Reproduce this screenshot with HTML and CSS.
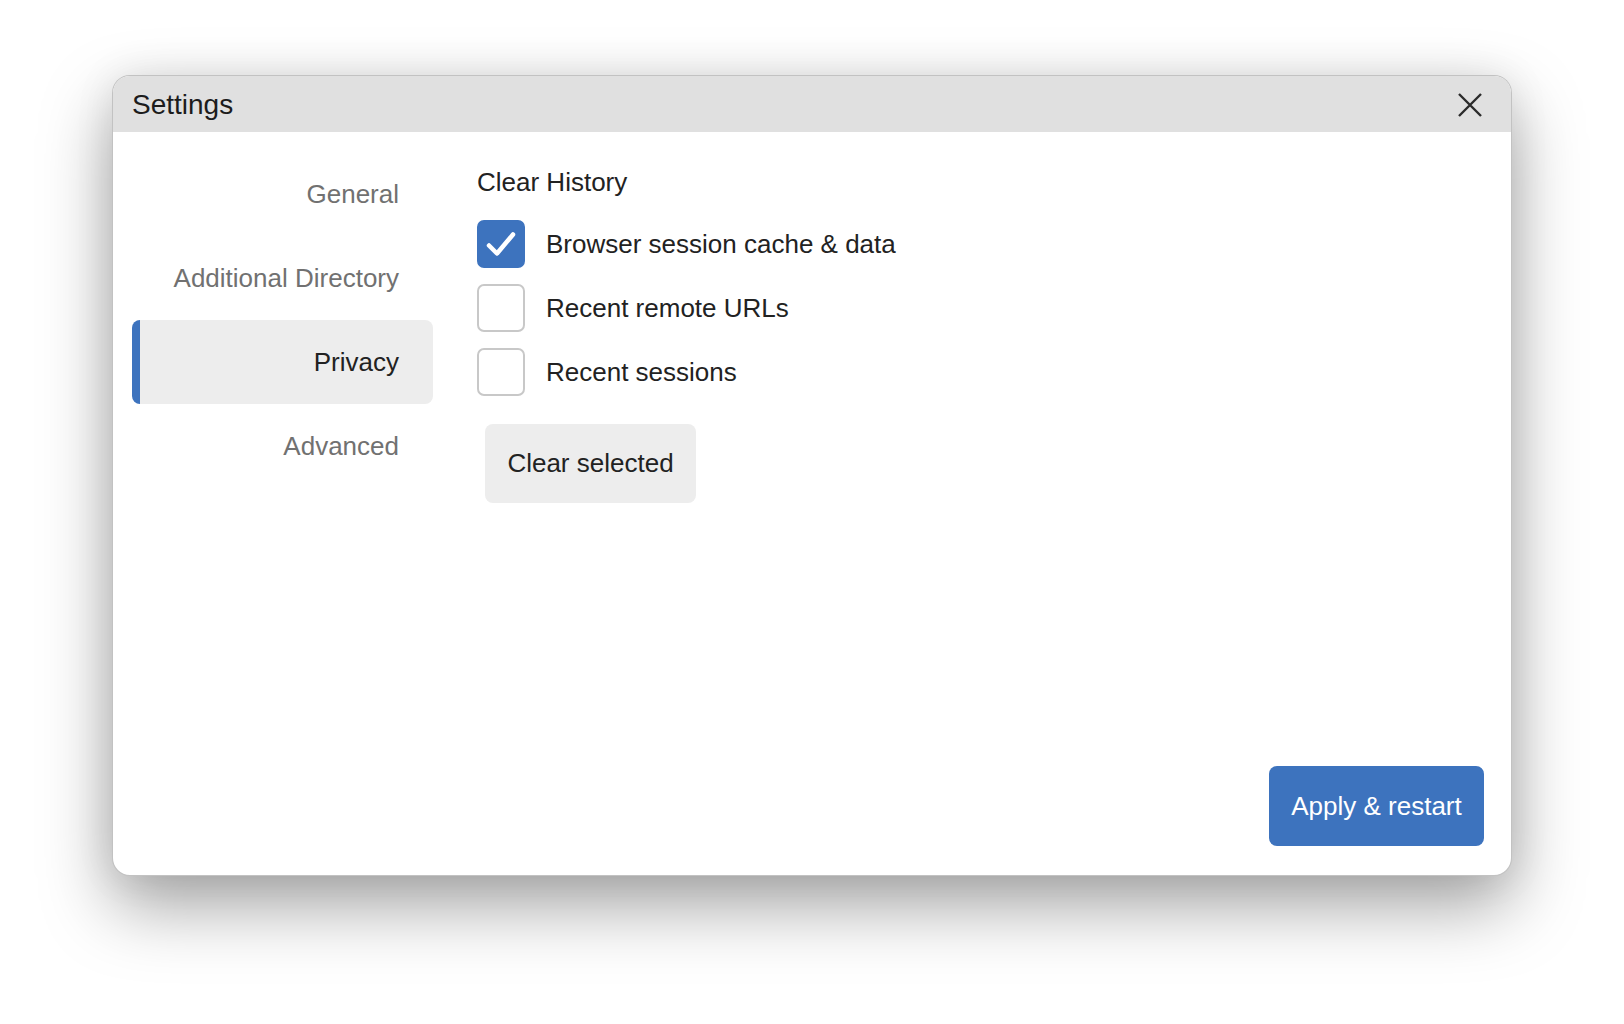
FILE: index.html
```html
<!DOCTYPE html>
<html lang="en">
<head>
<meta charset="utf-8">
<title>Settings</title>
<link rel="stylesheet" href="styles.css">
</head>
<body>
<div class="window">
  <header class="titlebar">
    <span class="title">Settings</span>
    <button class="close" aria-label="Close">
      <svg width="24" height="24" viewBox="0 0 24 24"><path d="M1 1 L23 23 M23 1 L1 23" stroke="#2a2a2a" stroke-width="2.4" fill="none"/></svg>
    </button>
  </header>
  <div class="main">
    <nav class="sidebar">
      <div class="nav-item">General</div>
      <div class="nav-item">Additional Directory</div>
      <div class="nav-item active">Privacy</div>
      <div class="nav-item">Advanced</div>
    </nav>
    <section class="content">
      <h2 class="heading">Clear History</h2>
      <div class="options">
        <label class="option">
          <span class="box checked">
            <svg width="48" height="48" viewBox="0 0 48 48"><path d="M12 25.5 L20 33.5 L36 14.5" stroke="#ffffff" stroke-width="4.5" stroke-linecap="round" stroke-linejoin="round" fill="none"/></svg>
          </span>
          <span class="label">Browser session cache &amp; data</span>
        </label>
        <label class="option">
          <span class="box"></span>
          <span class="label">Recent remote URLs</span>
        </label>
        <label class="option">
          <span class="box"></span>
          <span class="label">Recent sessions</span>
        </label>
      </div>
      <button class="btn-secondary">Clear selected</button>
    </section>
  </div>
  <footer class="footer">
    <button class="btn-primary">Apply &amp; restart</button>
  </footer>
</div>
</body>
</html>
```

FILE: styles.css
```css
* { box-sizing: border-box; }
html, body { margin: 0; padding: 0; }
body {
  background: #ffffff;
  width: 1624px;
  height: 1024px;
  overflow: hidden;
  font-family: "Liberation Sans", Arial, Helvetica, sans-serif;
  padding: 75px 0 0 112px;
}
.window {
  width: 1400px;
  height: 801px;
  background: #ffffff;
  border: 1px solid rgba(0,0,0,0.24);
  border-radius: 18px;
  overflow: hidden;
  display: flex;
  flex-direction: column;
  box-shadow: 0 30px 70px rgba(0,0,0,0.36), 0 0 40px rgba(0,0,0,0.08);
}
.titlebar {
  height: 56px;
  flex: none;
  background: #e0e0e0;
  display: flex;
  align-items: center;
  justify-content: space-between;
  padding: 0 29px 0 19px;
}
.title {
  font-size: 28px;
  color: #1c1c1c;
  line-height: 30px;
  padding-top: 2px;
}
.close {
  border: none;
  background: transparent;
  padding: 0;
  width: 24px;
  height: 24px;
  display: block;
  margin-top: 2px;
}
.close svg { display: block; }
.main {
  flex: 1;
  display: flex;
  padding: 20px 0 0 19px;
}
.sidebar {
  width: 301px;
  flex: none;
  display: flex;
  flex-direction: column;
}
.nav-item {
  height: 84px;
  display: flex;
  align-items: center;
  justify-content: flex-end;
  padding-right: 34px;
  font-size: 26px;
  color: #717171;
  border-radius: 8px;
}
.nav-item.active {
  background: #ededed;
  color: #222222;
  border-left: 8px solid #3d73be;
}
.content {
  margin-left: 44px;
  padding-top: 15px;
  display: flex;
  flex-direction: column;
  align-items: flex-start;
}
.heading {
  margin: 0;
  font-weight: normal;
  font-size: 26px;
  line-height: 30px;
  color: #222222;
}
.options {
  margin-top: 23px;
  display: flex;
  flex-direction: column;
  gap: 16px;
}
.option {
  display: flex;
  align-items: center;
  height: 48px;
}
.box {
  width: 48px;
  height: 48px;
  border: 2px solid #c8c8c8;
  border-radius: 7px;
  background: #ffffff;
  flex: none;
  position: relative;
}
.box.checked {
  background: #3d73be;
  border-color: #3d73be;
}
.box.checked svg {
  position: absolute;
  left: -2px;
  top: -2px;
}
.label {
  margin-left: 21px;
  font-size: 26px;
  color: #222222;
  line-height: 30px;
}
.btn-secondary {
  margin: 28px 0 0 8px;
  width: 211px;
  height: 79px;
  border: none;
  border-radius: 8px;
  background: #ededed;
  color: #222222;
  font-family: inherit;
  font-size: 26px;
  padding: 0;
}
.footer {
  flex: none;
  display: flex;
  justify-content: flex-end;
  padding: 0 27px 29px 0;
}
.btn-primary {
  width: 215px;
  height: 80px;
  border: none;
  border-radius: 8px;
  background: #3d73be;
  color: #ffffff;
  font-family: inherit;
  font-size: 26px;
  padding: 0;
}
```
